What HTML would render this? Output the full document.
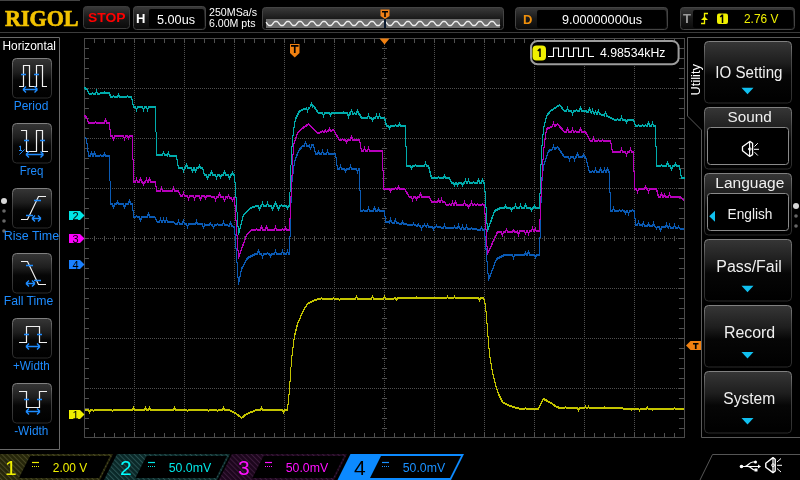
<!DOCTYPE html><html><head><meta charset="utf-8"><style>
html,body{margin:0;padding:0;background:#000;}
body{width:800px;height:480px;position:relative;overflow:hidden;font-family:"Liberation Sans",sans-serif;}
svg{position:absolute;left:0;top:0;will-change:transform;}
</style></head><body>
<svg width="800" height="480" viewBox="0 0 800 480">
<defs>
<linearGradient id="btn" x1="0" y1="0" x2="0" y2="1"><stop offset="0" stop-color="#363636"/><stop offset="0.35" stop-color="#1e1e1e"/><stop offset="0.55" stop-color="#060606"/><stop offset="1" stop-color="#000"/></linearGradient>
<linearGradient id="hbox" x1="0" y1="0" x2="0" y2="1"><stop offset="0" stop-color="#3a3a3a"/><stop offset="0.5" stop-color="#1a1a1a"/><stop offset="1" stop-color="#0a0a0a"/></linearGradient>
<linearGradient id="bord" x1="0" y1="0" x2="0" y2="1"><stop offset="0" stop-color="#808080"/><stop offset="0.3" stop-color="#4a4a4a"/><stop offset="1" stop-color="#2a2a2a"/></linearGradient>
<pattern id="hatY" width="3.6" height="3.6" patternUnits="userSpaceOnUse" patternTransform="rotate(-45)"><rect width="3.6" height="3.6" fill="#26260a"/><rect width="1" height="3.6" fill="#4a4a26"/></pattern>
<pattern id="hatC" width="3.6" height="3.6" patternUnits="userSpaceOnUse" patternTransform="rotate(-45)"><rect width="3.6" height="3.6" fill="#0a2828"/><rect width="1" height="3.6" fill="#2a5252"/></pattern>
<pattern id="hatM" width="3.6" height="3.6" patternUnits="userSpaceOnUse" patternTransform="rotate(-45)"><rect width="3.6" height="3.6" fill="#1c061c"/><rect width="1" height="3.6" fill="#3c1c3c"/></pattern>
</defs>
<line x1="0" y1="0.5" x2="80" y2="0.5" stroke="#444" stroke-width="1"/>
<line x1="0" y1="32.5" x2="800" y2="32.5" stroke="#3c3c3c" stroke-width="1"/>
<text x="5" y="26" font-family="Liberation Serif" font-weight="bold" font-size="24" fill="#f2c200" stroke="#f2c200" stroke-width="0.7" textLength="73.5" lengthAdjust="spacingAndGlyphs">RIGOL</text>
<rect x="83.5" y="6.5" width="46" height="22" rx="3" fill="url(#hbox)" stroke="#3c3c3c"/>
<text x="88" y="21.5" font-family="Liberation Sans" font-weight="bold" font-size="13.5" fill="#f00" textLength="37.5" lengthAdjust="spacingAndGlyphs">STOP</text>
<rect x="133.5" y="6.5" width="72" height="23" rx="3" fill="url(#hbox)" stroke="#444"/>
<rect x="149" y="9" width="55" height="19" rx="2" fill="#000"/>
<text x="136" y="23" font-family="Liberation Sans" font-weight="bold" font-size="13" fill="#fff">H</text>
<text x="157" y="24" font-family="Liberation Sans" font-size="12.5" fill="#fff" textLength="38" lengthAdjust="spacingAndGlyphs">5.00us</text>
<text x="209" y="16.2" font-family="Liberation Sans" font-size="11" fill="#fff" textLength="48" lengthAdjust="spacingAndGlyphs">250MSa/s</text>
<text x="209" y="27" font-family="Liberation Sans" font-size="11" fill="#fff" textLength="46.5" lengthAdjust="spacingAndGlyphs">6.00M pts</text>
<rect x="262.5" y="7.5" width="241" height="22" rx="3" fill="url(#hbox)" stroke="#444"/>
<rect x="266" y="19" width="234" height="9" fill="#6e6e6e"/>
<polyline points="266.0,22.2 267.0,23.5 268.0,24.8 269.0,25.5 270.0,25.5 271.0,25.5 272.0,24.8 273.0,23.5 274.0,22.2 275.0,21.5 276.0,21.5 277.0,21.5 278.0,22.2 279.0,23.5 280.0,24.8 281.0,25.5 282.0,25.5 283.0,25.5 284.0,24.8 285.0,23.5 286.0,22.3 287.0,21.5 288.0,21.5 289.0,21.5 290.0,22.2 291.0,23.5 292.0,24.7 293.0,25.5 294.0,25.5 295.0,25.5 296.0,24.8 297.0,23.5 298.0,22.3 299.0,21.5 300.0,21.5 301.0,21.5 302.0,22.2 303.0,23.5 304.0,24.8 305.0,25.5 306.0,25.5 307.0,25.5 308.0,24.8 309.0,23.5 310.0,22.2 311.0,21.5 312.0,21.5 313.0,21.5 314.0,22.2 315.0,23.5 316.0,24.7 317.0,25.5 318.0,25.5 319.0,25.5 320.0,24.7 321.0,23.5 322.0,22.2 323.0,21.5 324.0,21.5 325.0,21.5 326.0,22.2 327.0,23.5 328.0,24.8 329.0,25.5 330.0,25.5 331.0,25.5 332.0,24.8 333.0,23.5 334.0,22.3 335.0,21.5 336.0,21.5 337.0,21.5 338.0,22.3 339.0,23.5 340.0,24.8 341.0,25.5 342.0,25.5 343.0,25.5 344.0,24.8 345.0,23.5 346.0,22.3 347.0,21.5 348.0,21.5 349.0,21.5 350.0,22.2 351.0,23.5 352.0,24.7 353.0,25.5 354.0,25.5 355.0,25.5 356.0,24.8 357.0,23.5 358.0,22.3 359.0,21.5 360.0,21.5 361.0,21.5 362.0,22.2 363.0,23.5 364.0,24.8 365.0,25.5 366.0,25.5 367.0,25.5 368.0,24.8 369.0,23.5 370.0,22.2 371.0,21.5 372.0,21.5 373.0,21.5 374.0,22.2 375.0,23.5 376.0,24.7 377.0,25.5 378.0,25.5 379.0,25.5 380.0,24.7 381.0,23.5 382.0,22.3 383.0,21.5 384.0,21.5 385.0,21.5 386.0,22.2 387.0,23.5 388.0,24.7 389.0,25.5 390.0,25.5 391.0,25.5 392.0,24.8 393.0,23.5 394.0,22.3 395.0,21.5 396.0,21.5 397.0,21.5 398.0,22.2 399.0,23.5 400.0,24.7 401.0,25.5 402.0,25.5 403.0,25.5 404.0,24.8 405.0,23.5 406.0,22.2 407.0,21.5 408.0,21.5 409.0,21.5 410.0,22.2 411.0,23.5 412.0,24.8 413.0,25.5 414.0,25.5 415.0,25.5 416.0,24.8 417.0,23.5 418.0,22.3 419.0,21.5 420.0,21.5 421.0,21.5 422.0,22.2 423.0,23.5 424.0,24.7 425.0,25.5 426.0,25.5 427.0,25.5 428.0,24.8 429.0,23.5 430.0,22.2 431.0,21.5 432.0,21.5 433.0,21.5 434.0,22.2 435.0,23.5 436.0,24.8 437.0,25.5 438.0,25.5 439.0,25.5 440.0,24.7 441.0,23.5 442.0,22.3 443.0,21.5 444.0,21.5 445.0,21.5 446.0,22.2 447.0,23.5 448.0,24.7 449.0,25.5 450.0,25.5 451.0,25.5 452.0,24.8 453.0,23.5 454.0,22.3 455.0,21.5 456.0,21.5 457.0,21.5 458.0,22.2 459.0,23.5 460.0,24.8 461.0,25.5 462.0,25.5 463.0,25.5 464.0,24.8 465.0,23.5 466.0,22.3 467.0,21.5 468.0,21.5 469.0,21.5 470.0,22.3 471.0,23.5 472.0,24.7 473.0,25.5 474.0,25.5 475.0,25.5 476.0,24.8 477.0,23.5 478.0,22.2 479.0,21.5 480.0,21.5 481.0,21.5 482.0,22.2 483.0,23.5 484.0,24.7 485.0,25.5 486.0,25.5 487.0,25.5 488.0,24.8 489.0,23.5 490.0,22.2 491.0,21.5 492.0,21.5 493.0,21.5 494.0,22.2 495.0,23.5 496.0,24.7 497.0,25.5 498.0,25.5 499.0,25.5 500.0,24.7" fill="none" stroke="#eee" stroke-width="1.3"/>
<rect x="384" y="19" width="2" height="9" fill="#0a1a30"/>
<path d="M380.5 9.5 H389.5 V16 L385 19 L380.5 16 Z" fill="#f08018"/>
<path d="M382 11 H388 V12.5 H385.8 V17 H384.2 V12.5 H382 Z" fill="#000"/>
<rect x="515.5" y="7.5" width="152" height="22" rx="3" fill="url(#hbox)" stroke="#444"/>
<rect x="537" y="10" width="129" height="18" rx="2" fill="#000"/>
<text x="523" y="24" font-family="Liberation Sans" font-weight="bold" font-size="13" fill="#f0900c">D</text>
<text x="562" y="24" font-family="Liberation Sans" font-size="12.5" fill="#fff" textLength="80" lengthAdjust="spacingAndGlyphs">9.00000000us</text>
<rect x="680.5" y="7.5" width="114" height="22" rx="3" fill="url(#hbox)" stroke="#444"/>
<rect x="693" y="10" width="100" height="18" rx="2" fill="#000"/>
<text x="683" y="23" font-family="Liberation Sans" font-weight="bold" font-size="13" fill="#999">T</text>
<path d="M701 23.5 H704.5 V13.5 H708" fill="none" stroke="#f0f000" stroke-width="1.3"/><path d="M701 20 L704.5 16.5 L708 20 Z" fill="#f0f000"/>
<rect x="717" y="13.5" width="11" height="10.5" rx="2" fill="#f0f000"/>
<path d="M722.5 14.5 V23 M722.5 14.8 L720.3 17" stroke="#000" stroke-width="1.5" fill="none"/>
<text x="744" y="23" font-family="Liberation Sans" font-size="12" fill="#f0f000" textLength="34.3" lengthAdjust="spacingAndGlyphs">2.76 V</text>
<g shape-rendering="crispEdges"><line x1="134.5" y1="38" x2="134.5" y2="438" stroke="#505050" stroke-dasharray="1 1"/><line x1="184.5" y1="38" x2="184.5" y2="438" stroke="#505050" stroke-dasharray="1 1"/><line x1="234.5" y1="38" x2="234.5" y2="438" stroke="#505050" stroke-dasharray="1 1"/><line x1="284.5" y1="38" x2="284.5" y2="438" stroke="#505050" stroke-dasharray="1 1"/><line x1="334.5" y1="38" x2="334.5" y2="438" stroke="#505050" stroke-dasharray="1 1"/><line x1="434.5" y1="38" x2="434.5" y2="438" stroke="#505050" stroke-dasharray="1 1"/><line x1="484.5" y1="38" x2="484.5" y2="438" stroke="#505050" stroke-dasharray="1 1"/><line x1="534.5" y1="38" x2="534.5" y2="438" stroke="#505050" stroke-dasharray="1 1"/><line x1="584.5" y1="38" x2="584.5" y2="438" stroke="#505050" stroke-dasharray="1 1"/><line x1="634.5" y1="38" x2="634.5" y2="438" stroke="#505050" stroke-dasharray="1 1"/><line x1="84" y1="88.5" x2="684" y2="88.5" stroke="#505050" stroke-dasharray="1 1"/><line x1="84" y1="138.5" x2="684" y2="138.5" stroke="#505050" stroke-dasharray="1 1"/><line x1="84" y1="188.5" x2="684" y2="188.5" stroke="#505050" stroke-dasharray="1 1"/><line x1="84" y1="288.5" x2="684" y2="288.5" stroke="#505050" stroke-dasharray="1 1"/><line x1="84" y1="338.5" x2="684" y2="338.5" stroke="#505050" stroke-dasharray="1 1"/><line x1="84" y1="388.5" x2="684" y2="388.5" stroke="#505050" stroke-dasharray="1 1"/><line x1="384.5" y1="38" x2="384.5" y2="438" stroke="#505050" stroke-dasharray="1 1"/><line x1="84" y1="238.5" x2="684" y2="238.5" stroke="#505050" stroke-dasharray="1 1"/><path d="M94.5 38 V43 M94.5 433 V438 M94.5 236 V241 M104.5 38 V43 M104.5 433 V438 M104.5 236 V241 M114.5 38 V43 M114.5 433 V438 M114.5 236 V241 M124.5 38 V43 M124.5 433 V438 M124.5 236 V241 M134.5 38 V43 M134.5 433 V438 M134.5 236 V241 M144.5 38 V43 M144.5 433 V438 M144.5 236 V241 M154.5 38 V43 M154.5 433 V438 M154.5 236 V241 M164.5 38 V43 M164.5 433 V438 M164.5 236 V241 M174.5 38 V43 M174.5 433 V438 M174.5 236 V241 M184.5 38 V43 M184.5 433 V438 M184.5 236 V241 M194.5 38 V43 M194.5 433 V438 M194.5 236 V241 M204.5 38 V43 M204.5 433 V438 M204.5 236 V241 M214.5 38 V43 M214.5 433 V438 M214.5 236 V241 M224.5 38 V43 M224.5 433 V438 M224.5 236 V241 M234.5 38 V43 M234.5 433 V438 M234.5 236 V241 M244.5 38 V43 M244.5 433 V438 M244.5 236 V241 M254.5 38 V43 M254.5 433 V438 M254.5 236 V241 M264.5 38 V43 M264.5 433 V438 M264.5 236 V241 M274.5 38 V43 M274.5 433 V438 M274.5 236 V241 M284.5 38 V43 M284.5 433 V438 M284.5 236 V241 M294.5 38 V43 M294.5 433 V438 M294.5 236 V241 M304.5 38 V43 M304.5 433 V438 M304.5 236 V241 M314.5 38 V43 M314.5 433 V438 M314.5 236 V241 M324.5 38 V43 M324.5 433 V438 M324.5 236 V241 M334.5 38 V43 M334.5 433 V438 M334.5 236 V241 M344.5 38 V43 M344.5 433 V438 M344.5 236 V241 M354.5 38 V43 M354.5 433 V438 M354.5 236 V241 M364.5 38 V43 M364.5 433 V438 M364.5 236 V241 M374.5 38 V43 M374.5 433 V438 M374.5 236 V241 M384.5 38 V43 M384.5 433 V438 M384.5 236 V241 M394.5 38 V43 M394.5 433 V438 M394.5 236 V241 M404.5 38 V43 M404.5 433 V438 M404.5 236 V241 M414.5 38 V43 M414.5 433 V438 M414.5 236 V241 M424.5 38 V43 M424.5 433 V438 M424.5 236 V241 M434.5 38 V43 M434.5 433 V438 M434.5 236 V241 M444.5 38 V43 M444.5 433 V438 M444.5 236 V241 M454.5 38 V43 M454.5 433 V438 M454.5 236 V241 M464.5 38 V43 M464.5 433 V438 M464.5 236 V241 M474.5 38 V43 M474.5 433 V438 M474.5 236 V241 M484.5 38 V43 M484.5 433 V438 M484.5 236 V241 M494.5 38 V43 M494.5 433 V438 M494.5 236 V241 M504.5 38 V43 M504.5 433 V438 M504.5 236 V241 M514.5 38 V43 M514.5 433 V438 M514.5 236 V241 M524.5 38 V43 M524.5 433 V438 M524.5 236 V241 M534.5 38 V43 M534.5 433 V438 M534.5 236 V241 M544.5 38 V43 M544.5 433 V438 M544.5 236 V241 M554.5 38 V43 M554.5 433 V438 M554.5 236 V241 M564.5 38 V43 M564.5 433 V438 M564.5 236 V241 M574.5 38 V43 M574.5 433 V438 M574.5 236 V241 M584.5 38 V43 M584.5 433 V438 M584.5 236 V241 M594.5 38 V43 M594.5 433 V438 M594.5 236 V241 M604.5 38 V43 M604.5 433 V438 M604.5 236 V241 M614.5 38 V43 M614.5 433 V438 M614.5 236 V241 M624.5 38 V43 M624.5 433 V438 M624.5 236 V241 M634.5 38 V43 M634.5 433 V438 M634.5 236 V241 M644.5 38 V43 M644.5 433 V438 M644.5 236 V241 M654.5 38 V43 M654.5 433 V438 M654.5 236 V241 M664.5 38 V43 M664.5 433 V438 M664.5 236 V241 M674.5 38 V43 M674.5 433 V438 M674.5 236 V241 M84 48.5 H89 M679 48.5 H684 M382 48.5 H387 M84 58.5 H89 M679 58.5 H684 M382 58.5 H387 M84 68.5 H89 M679 68.5 H684 M382 68.5 H387 M84 78.5 H89 M679 78.5 H684 M382 78.5 H387 M84 88.5 H89 M679 88.5 H684 M382 88.5 H387 M84 98.5 H89 M679 98.5 H684 M382 98.5 H387 M84 108.5 H89 M679 108.5 H684 M382 108.5 H387 M84 118.5 H89 M679 118.5 H684 M382 118.5 H387 M84 128.5 H89 M679 128.5 H684 M382 128.5 H387 M84 138.5 H89 M679 138.5 H684 M382 138.5 H387 M84 148.5 H89 M679 148.5 H684 M382 148.5 H387 M84 158.5 H89 M679 158.5 H684 M382 158.5 H387 M84 168.5 H89 M679 168.5 H684 M382 168.5 H387 M84 178.5 H89 M679 178.5 H684 M382 178.5 H387 M84 188.5 H89 M679 188.5 H684 M382 188.5 H387 M84 198.5 H89 M679 198.5 H684 M382 198.5 H387 M84 208.5 H89 M679 208.5 H684 M382 208.5 H387 M84 218.5 H89 M679 218.5 H684 M382 218.5 H387 M84 228.5 H89 M679 228.5 H684 M382 228.5 H387 M84 238.5 H89 M679 238.5 H684 M382 238.5 H387 M84 248.5 H89 M679 248.5 H684 M382 248.5 H387 M84 258.5 H89 M679 258.5 H684 M382 258.5 H387 M84 268.5 H89 M679 268.5 H684 M382 268.5 H387 M84 278.5 H89 M679 278.5 H684 M382 278.5 H387 M84 288.5 H89 M679 288.5 H684 M382 288.5 H387 M84 298.5 H89 M679 298.5 H684 M382 298.5 H387 M84 308.5 H89 M679 308.5 H684 M382 308.5 H387 M84 318.5 H89 M679 318.5 H684 M382 318.5 H387 M84 328.5 H89 M679 328.5 H684 M382 328.5 H387 M84 338.5 H89 M679 338.5 H684 M382 338.5 H387 M84 348.5 H89 M679 348.5 H684 M382 348.5 H387 M84 358.5 H89 M679 358.5 H684 M382 358.5 H387 M84 368.5 H89 M679 368.5 H684 M382 368.5 H387 M84 378.5 H89 M679 378.5 H684 M382 378.5 H387 M84 388.5 H89 M679 388.5 H684 M382 388.5 H387 M84 398.5 H89 M679 398.5 H684 M382 398.5 H387 M84 408.5 H89 M679 408.5 H684 M382 408.5 H387 M84 418.5 H89 M679 418.5 H684 M382 418.5 H387 M84 428.5 H89 M679 428.5 H684 M382 428.5 H387" stroke="#505050" stroke-width="1" fill="none"/><rect x="84.5" y="38.5" width="600" height="399" fill="none" stroke="#4a4a4a"/></g>
<g transform="translate(0.5,0.5)" shape-rendering="crispEdges" fill="none" stroke="#c4c400" stroke-width="1"><polyline points="84.0,409.0 88.0,409.0 89.0,411.0 90.0,409.0 92.0,409.0 93.0,410.0 94.0,409.0 111.0,409.0 112.0,410.0 113.0,409.0 132.0,409.0 133.0,407.0 134.0,409.0 144.0,409.0 145.0,407.0 146.0,409.0 148.0,409.0 149.0,407.0 150.0,409.0 173.0,409.0 174.0,407.0 175.0,409.0 186.0,409.0 187.0,410.0 188.0,409.0 207.0,409.0 208.0,410.0 209.0,409.0 216.0,409.0 217.0,410.0 218.0,409.0 222.0,409.0 223.0,407.0 224.0,409.0 228.0,409.0 235.0,412.0 241.0,417.0 246.0,413.0 251.0,411.0 256.0,409.0 260.0,409.0 261.0,407.0 262.0,409.0 282.0,409.0 283.0,411.0 284.0,409.0 287.0,409.0 289.0,388.0 291.0,359.0 294.0,335.0 297.0,323.0 300.0,316.0 303.0,309.0 307.0,303.0 312.0,300.0 318.0,298.0 320.0,298.0 321.0,297.0 322.0,298.0 332.0,297.9 333.0,296.9 334.0,297.9 338.0,297.9 339.0,298.9 340.0,297.9 355.0,297.8 356.0,295.8 357.0,297.8 371.0,297.7 372.0,295.7 373.0,297.7 383.0,297.6 384.0,295.6 385.0,297.6 395.0,297.5 396.0,298.5 397.0,297.5 415.0,297.4 416.0,296.4 417.0,297.4 446.0,297.2 447.0,295.2 448.0,297.2 453.0,297.2 454.0,295.2 455.0,297.2 478.0,297.0 479.0,299.0 480.0,297.0 483.0,297.0 485.0,304.0 486.0,316.0 489.0,354.0 492.0,371.0 495.0,384.0 498.0,393.0 502.0,401.0 507.0,404.0 513.0,406.0 520.0,408.0 524.0,408.0 525.0,407.0 526.0,408.0 538.0,408.0 541.0,401.0 543.0,398.0 547.0,400.0 552.0,403.0 556.0,406.0 560.0,407.0 564.0,407.0 565.0,406.0 566.0,407.0 577.0,407.1 578.0,409.1 579.0,407.1 584.0,407.2 585.0,405.2 586.0,407.2 587.0,407.2 588.0,405.2 589.0,407.2 603.0,407.3 604.0,406.3 605.0,407.3 630.0,407.6 631.0,408.6 632.0,407.6 638.0,407.6 639.0,409.6 640.0,407.6 646.0,407.7 647.0,406.7 648.0,407.7 651.0,407.7 652.0,408.7 653.0,407.7 673.0,407.9 674.0,406.9 675.0,407.9 684.0,408.0"/><polyline points="84.0,410.0 88.0,410.0 89.0,412.0 90.0,410.0 92.0,410.0 93.0,411.0 94.0,410.0 111.0,410.0 112.0,411.0 113.0,410.0 132.0,410.0 133.0,408.0 134.0,410.0 144.0,410.0 145.0,408.0 146.0,410.0 148.0,410.0 149.0,408.0 150.0,410.0 173.0,410.0 174.0,408.0 175.0,410.0 186.0,410.0 187.0,411.0 188.0,410.0 207.0,410.0 208.0,411.0 209.0,410.0 216.0,410.0 217.0,411.0 218.0,410.0 222.0,410.0 223.0,408.0 224.0,410.0 228.0,410.0 235.0,413.0 241.0,418.0 246.0,414.0 251.0,412.0 256.0,410.0 260.0,410.0 261.0,408.0 262.0,410.0 282.0,410.0 283.0,412.0 284.0,410.0 287.0,410.0 289.0,389.0 291.0,360.0 294.0,336.0 297.0,324.0 300.0,317.0 303.0,310.0 307.0,304.0 312.0,301.0 318.0,299.0 320.0,299.0 321.0,298.0 322.0,299.0 332.0,298.9 333.0,297.9 334.0,298.9 338.0,298.9 339.0,299.9 340.0,298.9 355.0,298.8 356.0,296.8 357.0,298.8 371.0,298.7 372.0,296.7 373.0,298.7 383.0,298.6 384.0,296.6 385.0,298.6 395.0,298.5 396.0,299.5 397.0,298.5 415.0,298.4 416.0,297.4 417.0,298.4 446.0,298.2 447.0,296.2 448.0,298.2 453.0,298.2 454.0,296.2 455.0,298.2 478.0,298.0 479.0,300.0 480.0,298.0 483.0,298.0 485.0,305.0 486.0,317.0 489.0,355.0 492.0,372.0 495.0,385.0 498.0,394.0 502.0,402.0 507.0,405.0 513.0,407.0 520.0,409.0 524.0,409.0 525.0,408.0 526.0,409.0 538.0,409.0 541.0,402.0 543.0,399.0 547.0,401.0 552.0,404.0 556.0,407.0 560.0,408.0 564.0,408.0 565.0,407.0 566.0,408.0 577.0,408.1 578.0,410.1 579.0,408.1 584.0,408.2 585.0,406.2 586.0,408.2 587.0,408.2 588.0,406.2 589.0,408.2 603.0,408.3 604.0,407.3 605.0,408.3 630.0,408.6 631.0,409.6 632.0,408.6 638.0,408.6 639.0,410.6 640.0,408.6 646.0,408.7 647.0,407.7 648.0,408.7 651.0,408.7 652.0,409.7 653.0,408.7 673.0,408.9 674.0,407.9 675.0,408.9 684.0,409.0"/></g>
<g transform="translate(0.5,0.5)" shape-rendering="crispEdges"><polyline points="85.0,137.0 86.0,138.0 88.0,155.0 90.0,155.0 91.0,151.0 92.0,155.0 93.0,155.0 94.0,151.0 95.0,155.0 99.0,155.0 100.0,154.0 101.0,155.0 103.0,155.0 104.0,153.0 105.0,155.0 109.0,155.0 110.0,203.0 112.0,203.0 113.0,207.0 114.0,203.0 116.0,203.0 117.0,201.0 118.0,203.0 123.0,203.0 124.0,207.0 125.0,203.0 128.0,203.0 129.0,199.0 130.0,203.0 132.0,203.0 133.0,216.0 135.0,216.0 136.0,215.0 137.0,216.0 139.0,216.0 140.0,220.0 141.0,216.0 147.0,216.0 148.0,212.0 149.0,216.0 154.0,216.0 157.0,221.0 159.0,221.0 160.0,218.0 161.0,221.0 162.0,221.0 163.0,218.0 164.0,221.0 165.0,221.0 166.0,218.0 167.0,221.0 173.0,221.0 175.0,223.0 177.0,223.0 178.0,220.0 179.0,223.0 182.0,223.1 183.0,219.1 184.0,223.1 186.0,223.2 187.0,226.2 188.0,223.2 195.0,223.4 196.0,220.4 197.0,223.4 202.0,223.5 203.0,227.5 204.0,223.5 209.0,223.7 210.0,222.7 211.0,223.7 212.0,223.7 213.0,227.7 214.0,223.7 216.0,223.8 217.0,222.8 218.0,223.8 222.0,223.9 223.0,220.9 224.0,223.9 225.0,224.0 229.0,224.9 230.0,220.9 231.0,224.9 234.0,226.0 238.0,283.0 241.0,268.0 247.0,257.0 255.0,253.0 257.0,253.0 258.0,249.0 259.0,253.0 261.0,253.0 262.0,256.0 263.0,253.0 266.0,253.0 267.0,252.0 268.0,253.0 269.0,253.0 270.0,255.0 271.0,253.0 274.0,253.0 275.0,250.0 276.0,253.0 281.0,253.0 282.0,250.0 283.0,253.0 286.0,253.0 287.0,250.0 288.0,253.0 289.0,253.0 291.0,185.0 294.0,161.0 298.0,150.0 302.0,145.0 304.0,144.8 305.0,140.8 306.0,144.8 309.0,144.4 310.0,148.4 311.0,144.4 313.0,144.0 315.0,153.0 317.0,153.0 318.0,151.0 319.0,153.0 321.0,153.0 322.0,150.0 323.0,153.0 326.0,153.0 327.0,150.0 328.0,153.0 335.0,153.0 337.0,168.0 339.0,168.0 340.0,165.0 341.0,168.0 344.0,168.0 345.0,170.0 346.0,168.0 349.0,168.0 350.0,165.0 351.0,168.0 356.0,168.0 357.0,171.0 358.0,168.0 359.0,168.0 360.0,210.0 362.0,210.0 363.0,209.0 364.0,210.0 367.0,210.0 368.0,207.0 369.0,210.0 373.0,210.0 374.0,206.0 375.0,210.0 377.0,210.0 378.0,208.0 379.0,210.0 384.0,210.0 385.0,221.0 389.0,221.5 390.0,218.5 391.0,221.5 394.0,222.1 395.0,218.1 396.0,222.1 401.0,222.9 402.0,220.9 403.0,222.9 410.0,224.0 412.0,224.2 413.0,222.2 414.0,224.2 417.0,224.7 418.0,223.7 419.0,224.7 420.0,225.0 421.0,228.0 422.0,225.0 423.0,225.3 424.0,223.3 425.0,225.3 426.0,225.6 427.0,223.6 428.0,225.6 430.0,226.0 432.0,226.1 433.0,228.1 434.0,226.1 435.0,226.3 436.0,224.3 437.0,226.3 443.0,226.7 444.0,223.7 445.0,226.7 453.0,227.3 454.0,225.3 455.0,227.3 457.0,227.5 458.0,224.5 459.0,227.5 461.0,227.7 462.0,224.7 463.0,227.7 465.0,227.9 466.0,224.9 467.0,227.9 470.0,228.2 471.0,227.2 472.0,228.2 480.0,228.8 481.0,226.8 482.0,228.8 484.0,229.0 488.0,279.0 496.0,258.0 504.0,254.0 512.0,254.0 513.0,257.0 514.0,254.0 524.0,254.0 525.0,252.0 526.0,254.0 527.0,254.0 528.0,250.0 529.0,254.0 534.0,254.0 535.0,256.0 536.0,254.0 539.0,254.0 541.0,185.0 543.0,165.0 548.0,150.0 552.0,148.2 553.0,145.2 554.0,148.2 557.0,146.0 564.0,156.0 568.0,156.0 569.0,159.0 570.0,156.0 573.0,156.0 574.0,159.0 575.0,156.0 576.0,156.0 577.0,152.0 578.0,156.0 582.0,156.0 583.0,154.0 584.0,156.0 585.0,156.0 589.0,171.0 591.0,171.0 592.0,170.0 593.0,171.0 594.0,171.0 595.0,168.0 596.0,171.0 599.0,171.0 600.0,167.0 601.0,171.0 603.0,171.0 604.0,168.0 605.0,171.0 606.0,171.0 607.0,167.0 608.0,171.0 609.0,171.0 610.0,210.0 612.0,210.0 613.0,207.0 614.0,210.0 618.0,210.0 619.0,209.0 620.0,210.0 621.0,210.0 622.0,209.0 623.0,210.0 624.0,210.0 625.0,212.0 626.0,210.0 627.0,210.0 628.0,213.0 629.0,210.0 631.0,210.0 632.0,209.0 633.0,210.0 634.0,210.0 635.0,224.0 637.0,224.2 638.0,221.2 639.0,224.2 642.0,224.6 643.0,221.6 644.0,224.6 647.0,225.0 648.0,223.0 649.0,225.0 652.0,225.4 653.0,222.4 654.0,225.4 655.0,225.6 656.0,227.6 657.0,225.6 659.0,226.0 660.0,230.0 661.0,226.0 665.0,226.4 666.0,223.4 667.0,226.4 668.0,226.7 669.0,223.7 670.0,226.7 673.0,227.1 674.0,224.1 675.0,227.1 677.0,227.4 678.0,225.4 679.0,227.4 684.0,228.0" fill="none" stroke="#0a5ab4" stroke-width="1"/><polyline points="85.0,138.0 86.0,139.0 88.0,156.0 90.0,156.0 91.0,152.0 92.0,156.0 93.0,156.0 94.0,152.0 95.0,156.0 99.0,156.0 100.0,155.0 101.0,156.0 103.0,156.0 104.0,154.0 105.0,156.0 109.0,156.0 110.0,204.0 112.0,204.0 113.0,208.0 114.0,204.0 116.0,204.0 117.0,202.0 118.0,204.0 123.0,204.0 124.0,208.0 125.0,204.0 128.0,204.0 129.0,200.0 130.0,204.0 132.0,204.0 133.0,217.0 135.0,217.0 136.0,216.0 137.0,217.0 139.0,217.0 140.0,221.0 141.0,217.0 147.0,217.0 148.0,213.0 149.0,217.0 154.0,217.0 157.0,222.0 159.0,222.0 160.0,219.0 161.0,222.0 162.0,222.0 163.0,219.0 164.0,222.0 165.0,222.0 166.0,219.0 167.0,222.0 173.0,222.0 175.0,224.0 177.0,224.0 178.0,221.0 179.0,224.0 182.0,224.1 183.0,220.1 184.0,224.1 186.0,224.2 187.0,227.2 188.0,224.2 195.0,224.4 196.0,221.4 197.0,224.4 202.0,224.5 203.0,228.5 204.0,224.5 209.0,224.7 210.0,223.7 211.0,224.7 212.0,224.7 213.0,228.7 214.0,224.7 216.0,224.8 217.0,223.8 218.0,224.8 222.0,224.9 223.0,221.9 224.0,224.9 225.0,225.0 229.0,225.9 230.0,221.9 231.0,225.9 234.0,227.0 238.0,284.0 241.0,269.0 247.0,258.0 255.0,254.0 257.0,254.0 258.0,250.0 259.0,254.0 261.0,254.0 262.0,257.0 263.0,254.0 266.0,254.0 267.0,253.0 268.0,254.0 269.0,254.0 270.0,256.0 271.0,254.0 274.0,254.0 275.0,251.0 276.0,254.0 281.0,254.0 282.0,251.0 283.0,254.0 286.0,254.0 287.0,251.0 288.0,254.0 289.0,254.0 291.0,186.0 294.0,162.0 298.0,151.0 302.0,146.0 304.0,145.8 305.0,141.8 306.0,145.8 309.0,145.4 310.0,149.4 311.0,145.4 313.0,145.0 315.0,154.0 317.0,154.0 318.0,152.0 319.0,154.0 321.0,154.0 322.0,151.0 323.0,154.0 326.0,154.0 327.0,151.0 328.0,154.0 335.0,154.0 337.0,169.0 339.0,169.0 340.0,166.0 341.0,169.0 344.0,169.0 345.0,171.0 346.0,169.0 349.0,169.0 350.0,166.0 351.0,169.0 356.0,169.0 357.0,172.0 358.0,169.0 359.0,169.0 360.0,211.0 362.0,211.0 363.0,210.0 364.0,211.0 367.0,211.0 368.0,208.0 369.0,211.0 373.0,211.0 374.0,207.0 375.0,211.0 377.0,211.0 378.0,209.0 379.0,211.0 384.0,211.0 385.0,222.0 389.0,222.5 390.0,219.5 391.0,222.5 394.0,223.1 395.0,219.1 396.0,223.1 401.0,223.9 402.0,221.9 403.0,223.9 410.0,225.0 412.0,225.2 413.0,223.2 414.0,225.2 417.0,225.7 418.0,224.7 419.0,225.7 420.0,226.0 421.0,229.0 422.0,226.0 423.0,226.3 424.0,224.3 425.0,226.3 426.0,226.6 427.0,224.6 428.0,226.6 430.0,227.0 432.0,227.1 433.0,229.1 434.0,227.1 435.0,227.3 436.0,225.3 437.0,227.3 443.0,227.7 444.0,224.7 445.0,227.7 453.0,228.3 454.0,226.3 455.0,228.3 457.0,228.5 458.0,225.5 459.0,228.5 461.0,228.7 462.0,225.7 463.0,228.7 465.0,228.9 466.0,225.9 467.0,228.9 470.0,229.2 471.0,228.2 472.0,229.2 480.0,229.8 481.0,227.8 482.0,229.8 484.0,230.0 488.0,280.0 496.0,259.0 504.0,255.0 512.0,255.0 513.0,258.0 514.0,255.0 524.0,255.0 525.0,253.0 526.0,255.0 527.0,255.0 528.0,251.0 529.0,255.0 534.0,255.0 535.0,257.0 536.0,255.0 539.0,255.0 541.0,186.0 543.0,166.0 548.0,151.0 552.0,149.2 553.0,146.2 554.0,149.2 557.0,147.0 564.0,157.0 568.0,157.0 569.0,160.0 570.0,157.0 573.0,157.0 574.0,160.0 575.0,157.0 576.0,157.0 577.0,153.0 578.0,157.0 582.0,157.0 583.0,155.0 584.0,157.0 585.0,157.0 589.0,172.0 591.0,172.0 592.0,171.0 593.0,172.0 594.0,172.0 595.0,169.0 596.0,172.0 599.0,172.0 600.0,168.0 601.0,172.0 603.0,172.0 604.0,169.0 605.0,172.0 606.0,172.0 607.0,168.0 608.0,172.0 609.0,172.0 610.0,211.0 612.0,211.0 613.0,208.0 614.0,211.0 618.0,211.0 619.0,210.0 620.0,211.0 621.0,211.0 622.0,210.0 623.0,211.0 624.0,211.0 625.0,213.0 626.0,211.0 627.0,211.0 628.0,214.0 629.0,211.0 631.0,211.0 632.0,210.0 633.0,211.0 634.0,211.0 635.0,225.0 637.0,225.2 638.0,222.2 639.0,225.2 642.0,225.6 643.0,222.6 644.0,225.6 647.0,226.0 648.0,224.0 649.0,226.0 652.0,226.4 653.0,223.4 654.0,226.4 655.0,226.6 656.0,228.6 657.0,226.6 659.0,227.0 660.0,231.0 661.0,227.0 665.0,227.4 666.0,224.4 667.0,227.4 668.0,227.7 669.0,224.7 670.0,227.7 673.0,228.1 674.0,225.1 675.0,228.1 677.0,228.4 678.0,226.4 679.0,228.4 684.0,229.0" fill="none" stroke="#0a5ab4" stroke-width="1"/></g>
<g transform="translate(0.5,0.5)" shape-rendering="crispEdges"><polyline points="84.0,115.0 86.0,116.0 88.0,122.0 94.0,122.0 95.0,121.0 96.0,122.0 104.0,122.0 105.0,118.0 106.0,122.0 109.0,122.0 110.0,135.0 112.0,135.0 113.0,139.0 114.0,135.0 123.0,135.0 124.0,138.0 125.0,135.0 127.0,135.0 128.0,137.0 129.0,135.0 132.0,135.0 133.0,181.0 135.0,181.0 136.0,178.0 137.0,181.0 139.0,181.0 140.0,177.0 141.0,181.0 142.0,181.0 143.0,183.0 144.0,181.0 145.0,181.0 146.0,178.0 147.0,181.0 148.0,181.0 149.0,177.0 150.0,181.0 155.0,181.0 156.0,190.0 160.0,190.0 161.0,187.0 162.0,190.0 172.0,190.0 173.0,187.0 174.0,190.0 178.0,190.0 180.0,195.0 182.0,195.0 183.0,192.0 184.0,195.0 187.0,195.0 188.0,198.0 189.0,195.0 193.0,195.0 194.0,198.0 195.0,195.0 199.0,195.0 200.0,199.0 201.0,195.0 202.0,195.0 204.0,195.1 205.0,197.1 206.0,195.1 214.0,195.8 215.0,198.8 216.0,195.8 218.0,196.0 219.0,192.0 220.0,196.0 223.0,196.3 224.0,200.3 225.0,196.3 227.0,196.6 228.0,194.6 229.0,196.6 231.0,196.8 232.0,200.8 233.0,196.8 234.0,197.0 238.0,257.0 246.0,234.0 251.0,229.0 255.0,229.0 256.0,228.0 257.0,229.0 260.0,229.0 261.0,225.0 262.0,229.0 265.0,229.0 266.0,225.0 267.0,229.0 274.0,229.0 275.0,226.0 276.0,229.0 281.0,229.0 282.0,228.0 283.0,229.0 284.0,229.0 285.0,227.0 286.0,229.0 289.0,229.0 291.0,185.0 293.0,144.0 297.0,132.0 301.0,128.0 308.0,123.0 317.0,132.0 321.0,131.2 322.0,130.2 323.0,131.2 324.0,130.7 325.0,129.7 326.0,130.7 328.0,129.9 329.0,127.9 330.0,129.9 333.0,129.0 339.0,139.0 341.0,139.0 342.0,138.0 343.0,139.0 345.0,139.0 346.0,141.0 347.0,139.0 350.0,139.0 351.0,135.0 352.0,139.0 359.0,139.0 361.0,150.0 363.0,150.0 364.0,147.0 365.0,150.0 367.0,150.0 368.0,147.0 369.0,150.0 382.0,150.0 383.0,188.0 389.0,188.0 390.0,190.0 391.0,188.0 394.0,188.0 395.0,187.0 396.0,188.0 397.0,188.0 398.0,186.0 399.0,188.0 404.0,188.0 409.0,196.0 411.0,196.0 412.0,199.0 413.0,196.0 415.0,196.0 416.0,198.0 417.0,196.0 419.0,196.0 420.0,192.0 421.0,196.0 429.0,196.0 431.0,201.0 437.0,201.0 438.0,199.0 439.0,201.0 440.0,201.0 441.0,198.0 442.0,201.0 444.0,201.0 446.0,204.0 448.0,204.0 449.0,203.0 450.0,204.0 451.0,204.0 452.0,201.0 453.0,204.0 454.0,204.0 455.0,200.0 456.0,204.0 463.0,204.0 464.0,201.0 465.0,204.0 467.0,204.0 468.0,206.0 469.0,204.0 470.0,204.0 471.0,201.0 472.0,204.0 473.0,204.0 474.0,203.0 475.0,204.0 476.0,204.0 477.0,203.0 478.0,204.0 481.0,204.0 482.0,203.0 483.0,204.0 484.0,204.0 487.0,253.0 497.0,231.0 501.0,230.9 502.0,234.9 503.0,230.9 505.0,230.8 506.0,228.8 507.0,230.8 512.0,230.6 513.0,229.6 514.0,230.6 517.0,230.5 518.0,233.5 519.0,230.5 524.0,230.4 525.0,232.4 526.0,230.4 527.0,230.3 528.0,233.3 529.0,230.3 531.0,230.2 532.0,227.2 533.0,230.2 534.0,230.1 535.0,228.1 536.0,230.1 539.0,230.0 541.0,185.0 543.0,150.0 546.0,128.0 552.0,125.3 553.0,122.3 554.0,125.3 557.0,123.0 564.0,131.0 566.0,131.0 567.0,127.0 568.0,131.0 571.0,131.0 572.0,128.0 573.0,131.0 574.0,131.0 575.0,130.0 576.0,131.0 579.0,131.0 580.0,127.0 581.0,131.0 585.0,131.0 590.0,140.0 592.0,140.0 593.0,137.0 594.0,140.0 597.0,140.0 598.0,139.0 599.0,140.0 601.0,140.0 602.0,139.0 603.0,140.0 610.0,140.0 612.0,151.0 620.0,151.0 621.0,148.0 622.0,151.0 625.0,151.0 626.0,154.0 627.0,151.0 629.0,151.0 630.0,148.0 631.0,151.0 633.0,151.0 634.0,188.0 636.0,188.0 637.0,191.0 638.0,188.0 644.0,188.0 645.0,186.0 646.0,188.0 647.0,188.0 648.0,191.0 649.0,188.0 656.0,188.0 658.0,196.0 660.0,196.0 661.0,192.0 662.0,196.0 663.0,196.0 664.0,194.0 665.0,196.0 668.0,196.0 669.0,193.0 670.0,196.0 680.0,196.0 684.0,200.0" fill="none" stroke="#b800bc" stroke-width="1"/><polyline points="84.0,116.0 86.0,117.0 88.0,123.0 94.0,123.0 95.0,122.0 96.0,123.0 104.0,123.0 105.0,119.0 106.0,123.0 109.0,123.0 110.0,136.0 112.0,136.0 113.0,140.0 114.0,136.0 123.0,136.0 124.0,139.0 125.0,136.0 127.0,136.0 128.0,138.0 129.0,136.0 132.0,136.0 133.0,182.0 135.0,182.0 136.0,179.0 137.0,182.0 139.0,182.0 140.0,178.0 141.0,182.0 142.0,182.0 143.0,184.0 144.0,182.0 145.0,182.0 146.0,179.0 147.0,182.0 148.0,182.0 149.0,178.0 150.0,182.0 155.0,182.0 156.0,191.0 160.0,191.0 161.0,188.0 162.0,191.0 172.0,191.0 173.0,188.0 174.0,191.0 178.0,191.0 180.0,196.0 182.0,196.0 183.0,193.0 184.0,196.0 187.0,196.0 188.0,199.0 189.0,196.0 193.0,196.0 194.0,199.0 195.0,196.0 199.0,196.0 200.0,200.0 201.0,196.0 202.0,196.0 204.0,196.1 205.0,198.1 206.0,196.1 214.0,196.8 215.0,199.8 216.0,196.8 218.0,197.0 219.0,193.0 220.0,197.0 223.0,197.3 224.0,201.3 225.0,197.3 227.0,197.6 228.0,195.6 229.0,197.6 231.0,197.8 232.0,201.8 233.0,197.8 234.0,198.0 238.0,258.0 246.0,235.0 251.0,230.0 255.0,230.0 256.0,229.0 257.0,230.0 260.0,230.0 261.0,226.0 262.0,230.0 265.0,230.0 266.0,226.0 267.0,230.0 274.0,230.0 275.0,227.0 276.0,230.0 281.0,230.0 282.0,229.0 283.0,230.0 284.0,230.0 285.0,228.0 286.0,230.0 289.0,230.0 291.0,186.0 293.0,145.0 297.0,133.0 301.0,129.0 308.0,124.0 317.0,133.0 321.0,132.2 322.0,131.2 323.0,132.2 324.0,131.7 325.0,130.7 326.0,131.7 328.0,130.9 329.0,128.9 330.0,130.9 333.0,130.0 339.0,140.0 341.0,140.0 342.0,139.0 343.0,140.0 345.0,140.0 346.0,142.0 347.0,140.0 350.0,140.0 351.0,136.0 352.0,140.0 359.0,140.0 361.0,151.0 363.0,151.0 364.0,148.0 365.0,151.0 367.0,151.0 368.0,148.0 369.0,151.0 382.0,151.0 383.0,189.0 389.0,189.0 390.0,191.0 391.0,189.0 394.0,189.0 395.0,188.0 396.0,189.0 397.0,189.0 398.0,187.0 399.0,189.0 404.0,189.0 409.0,197.0 411.0,197.0 412.0,200.0 413.0,197.0 415.0,197.0 416.0,199.0 417.0,197.0 419.0,197.0 420.0,193.0 421.0,197.0 429.0,197.0 431.0,202.0 437.0,202.0 438.0,200.0 439.0,202.0 440.0,202.0 441.0,199.0 442.0,202.0 444.0,202.0 446.0,205.0 448.0,205.0 449.0,204.0 450.0,205.0 451.0,205.0 452.0,202.0 453.0,205.0 454.0,205.0 455.0,201.0 456.0,205.0 463.0,205.0 464.0,202.0 465.0,205.0 467.0,205.0 468.0,207.0 469.0,205.0 470.0,205.0 471.0,202.0 472.0,205.0 473.0,205.0 474.0,204.0 475.0,205.0 476.0,205.0 477.0,204.0 478.0,205.0 481.0,205.0 482.0,204.0 483.0,205.0 484.0,205.0 487.0,254.0 497.0,232.0 501.0,231.9 502.0,235.9 503.0,231.9 505.0,231.8 506.0,229.8 507.0,231.8 512.0,231.6 513.0,230.6 514.0,231.6 517.0,231.5 518.0,234.5 519.0,231.5 524.0,231.4 525.0,233.4 526.0,231.4 527.0,231.3 528.0,234.3 529.0,231.3 531.0,231.2 532.0,228.2 533.0,231.2 534.0,231.1 535.0,229.1 536.0,231.1 539.0,231.0 541.0,186.0 543.0,151.0 546.0,129.0 552.0,126.3 553.0,123.3 554.0,126.3 557.0,124.0 564.0,132.0 566.0,132.0 567.0,128.0 568.0,132.0 571.0,132.0 572.0,129.0 573.0,132.0 574.0,132.0 575.0,131.0 576.0,132.0 579.0,132.0 580.0,128.0 581.0,132.0 585.0,132.0 590.0,141.0 592.0,141.0 593.0,138.0 594.0,141.0 597.0,141.0 598.0,140.0 599.0,141.0 601.0,141.0 602.0,140.0 603.0,141.0 610.0,141.0 612.0,152.0 620.0,152.0 621.0,149.0 622.0,152.0 625.0,152.0 626.0,155.0 627.0,152.0 629.0,152.0 630.0,149.0 631.0,152.0 633.0,152.0 634.0,189.0 636.0,189.0 637.0,192.0 638.0,189.0 644.0,189.0 645.0,187.0 646.0,189.0 647.0,189.0 648.0,192.0 649.0,189.0 656.0,189.0 658.0,197.0 660.0,197.0 661.0,193.0 662.0,197.0 663.0,197.0 664.0,195.0 665.0,197.0 668.0,197.0 669.0,194.0 670.0,197.0 680.0,197.0 684.0,201.0" fill="none" stroke="#b800bc" stroke-width="1"/></g>
<g transform="translate(0.5,0.5)" shape-rendering="crispEdges"><polyline points="84.0,87.0 86.0,88.0 89.0,93.0 91.0,92.9 92.0,91.9 93.0,92.9 95.0,92.7 96.0,89.7 97.0,92.7 103.0,92.3 104.0,91.3 105.0,92.3 109.0,92.0 110.0,96.0 112.0,96.0 113.0,95.0 114.0,96.0 117.0,96.0 118.0,94.0 119.0,96.0 126.0,96.0 127.0,95.0 128.0,96.0 131.0,96.0 133.0,106.0 135.0,106.0 136.0,109.0 137.0,106.0 142.0,106.0 143.0,109.0 144.0,106.0 146.0,106.0 147.0,109.0 148.0,106.0 155.0,106.0 156.0,154.0 162.0,154.3 163.0,150.3 164.0,154.3 167.0,154.6 168.0,151.6 169.0,154.6 176.0,155.0 178.0,167.0 182.0,167.0 183.0,170.0 184.0,167.0 185.0,167.0 186.0,163.0 187.0,167.0 191.0,167.0 192.0,171.0 193.0,167.0 194.0,167.0 195.0,171.0 196.0,167.0 198.0,167.0 199.0,165.0 200.0,167.0 202.0,167.0 204.0,174.0 206.0,174.0 207.0,178.0 208.0,174.0 210.0,174.0 211.0,170.0 212.0,174.0 215.0,174.0 216.0,177.0 217.0,174.0 219.0,174.0 220.0,176.0 221.0,174.0 223.0,174.0 224.0,170.0 225.0,174.0 228.0,174.0 229.0,178.0 230.0,174.0 231.0,174.0 232.0,172.0 233.0,174.0 234.0,174.0 238.0,233.0 243.0,214.0 250.0,207.0 256.0,205.0 258.0,205.0 259.0,209.0 260.0,205.0 261.0,205.0 262.0,202.0 263.0,205.0 266.0,205.0 267.0,202.0 268.0,205.0 271.0,205.0 272.0,209.0 273.0,205.0 274.0,205.0 275.0,201.0 276.0,205.0 277.0,205.0 278.0,209.0 279.0,205.0 280.0,205.0 281.0,204.0 282.0,205.0 286.0,205.0 287.0,207.0 288.0,205.0 289.0,205.0 291.0,151.0 293.0,129.0 295.0,118.0 299.0,110.0 304.0,108.0 306.0,107.3 307.0,110.3 308.0,107.3 310.0,106.0 311.0,102.0 312.0,106.0 313.0,105.0 318.0,112.0 322.0,112.0 323.0,115.0 324.0,112.0 329.0,112.0 330.0,114.0 331.0,112.0 334.0,112.0 342.0,112.3 343.0,111.3 344.0,112.3 347.0,112.5 348.0,115.5 349.0,112.5 350.0,112.6 351.0,108.6 352.0,112.6 353.0,112.8 354.0,111.8 355.0,112.8 356.0,112.9 357.0,108.9 358.0,112.9 359.0,113.0 361.0,117.0 367.0,117.0 368.0,114.0 369.0,117.0 371.0,117.0 372.0,119.0 373.0,117.0 375.0,117.0 376.0,114.0 377.0,117.0 378.0,117.0 379.0,114.0 380.0,117.0 384.0,117.0 386.0,125.0 388.0,125.0 389.0,127.0 390.0,125.0 394.0,125.0 395.0,124.0 396.0,125.0 398.0,125.0 399.0,123.0 400.0,125.0 405.0,125.0 406.0,165.0 410.0,165.0 411.0,167.0 412.0,165.0 414.0,165.0 415.0,164.0 416.0,165.0 424.0,165.0 425.0,162.0 426.0,165.0 428.0,165.0 431.0,177.0 437.0,177.0 438.0,176.0 439.0,177.0 443.0,177.0 444.0,175.0 445.0,177.0 449.0,177.0 451.0,182.0 453.0,182.0 454.0,184.0 455.0,182.0 456.0,182.0 457.0,184.0 458.0,182.0 461.0,182.0 462.0,184.0 463.0,182.0 464.0,182.0 465.0,179.0 466.0,182.0 467.0,182.0 468.0,179.0 469.0,182.0 472.0,182.0 473.0,181.0 474.0,182.0 477.0,182.0 478.0,178.0 479.0,182.0 481.0,182.0 482.0,178.0 483.0,182.0 484.0,182.0 487.0,230.0 494.0,210.0 500.0,207.0 504.0,207.0 505.0,205.0 506.0,207.0 510.0,207.0 511.0,209.0 512.0,207.0 514.0,207.0 515.0,204.0 516.0,207.0 519.0,207.0 520.0,204.0 521.0,207.0 524.0,207.0 525.0,203.0 526.0,207.0 530.0,207.0 531.0,209.0 532.0,207.0 533.0,207.0 534.0,205.0 535.0,207.0 539.0,207.0 541.0,150.0 543.0,128.0 546.0,115.0 550.0,110.0 559.0,104.0 564.0,110.0 566.0,110.0 567.0,107.0 568.0,110.0 571.0,110.0 572.0,113.0 573.0,110.0 575.0,110.0 576.0,109.0 577.0,110.0 579.0,110.0 580.0,106.0 581.0,110.0 584.0,110.0 588.0,111.0 589.0,107.0 590.0,111.0 591.0,111.7 592.0,108.7 593.0,111.7 594.0,112.4 595.0,110.4 596.0,112.4 597.0,113.1 598.0,109.1 599.0,113.1 604.0,114.8 605.0,110.8 606.0,114.8 609.0,116.0 614.0,119.0 616.0,119.0 617.0,118.0 618.0,119.0 620.0,119.0 621.0,116.0 622.0,119.0 625.0,119.0 626.0,121.0 627.0,119.0 633.0,119.0 635.0,125.0 637.0,125.0 638.0,124.0 639.0,125.0 641.0,125.0 642.0,124.0 643.0,125.0 644.0,125.0 645.0,124.0 646.0,125.0 647.0,125.0 648.0,121.0 649.0,125.0 651.0,125.0 652.0,122.0 653.0,125.0 655.0,125.0 656.0,165.0 660.0,165.0 661.0,164.0 662.0,165.0 666.0,165.0 667.0,161.0 668.0,165.0 670.0,165.0 671.0,169.0 672.0,165.0 674.0,165.0 675.0,163.0 676.0,165.0 679.0,165.0 681.0,177.0 684.0,177.0" fill="none" stroke="#00acac" stroke-width="1"/><polyline points="84.0,88.0 86.0,89.0 89.0,94.0 91.0,93.9 92.0,92.9 93.0,93.9 95.0,93.7 96.0,90.7 97.0,93.7 103.0,93.3 104.0,92.3 105.0,93.3 109.0,93.0 110.0,97.0 112.0,97.0 113.0,96.0 114.0,97.0 117.0,97.0 118.0,95.0 119.0,97.0 126.0,97.0 127.0,96.0 128.0,97.0 131.0,97.0 133.0,107.0 135.0,107.0 136.0,110.0 137.0,107.0 142.0,107.0 143.0,110.0 144.0,107.0 146.0,107.0 147.0,110.0 148.0,107.0 155.0,107.0 156.0,155.0 162.0,155.3 163.0,151.3 164.0,155.3 167.0,155.6 168.0,152.6 169.0,155.6 176.0,156.0 178.0,168.0 182.0,168.0 183.0,171.0 184.0,168.0 185.0,168.0 186.0,164.0 187.0,168.0 191.0,168.0 192.0,172.0 193.0,168.0 194.0,168.0 195.0,172.0 196.0,168.0 198.0,168.0 199.0,166.0 200.0,168.0 202.0,168.0 204.0,175.0 206.0,175.0 207.0,179.0 208.0,175.0 210.0,175.0 211.0,171.0 212.0,175.0 215.0,175.0 216.0,178.0 217.0,175.0 219.0,175.0 220.0,177.0 221.0,175.0 223.0,175.0 224.0,171.0 225.0,175.0 228.0,175.0 229.0,179.0 230.0,175.0 231.0,175.0 232.0,173.0 233.0,175.0 234.0,175.0 238.0,234.0 243.0,215.0 250.0,208.0 256.0,206.0 258.0,206.0 259.0,210.0 260.0,206.0 261.0,206.0 262.0,203.0 263.0,206.0 266.0,206.0 267.0,203.0 268.0,206.0 271.0,206.0 272.0,210.0 273.0,206.0 274.0,206.0 275.0,202.0 276.0,206.0 277.0,206.0 278.0,210.0 279.0,206.0 280.0,206.0 281.0,205.0 282.0,206.0 286.0,206.0 287.0,208.0 288.0,206.0 289.0,206.0 291.0,152.0 293.0,130.0 295.0,119.0 299.0,111.0 304.0,109.0 306.0,108.3 307.0,111.3 308.0,108.3 310.0,107.0 311.0,103.0 312.0,107.0 313.0,106.0 318.0,113.0 322.0,113.0 323.0,116.0 324.0,113.0 329.0,113.0 330.0,115.0 331.0,113.0 334.0,113.0 342.0,113.3 343.0,112.3 344.0,113.3 347.0,113.5 348.0,116.5 349.0,113.5 350.0,113.6 351.0,109.6 352.0,113.6 353.0,113.8 354.0,112.8 355.0,113.8 356.0,113.9 357.0,109.9 358.0,113.9 359.0,114.0 361.0,118.0 367.0,118.0 368.0,115.0 369.0,118.0 371.0,118.0 372.0,120.0 373.0,118.0 375.0,118.0 376.0,115.0 377.0,118.0 378.0,118.0 379.0,115.0 380.0,118.0 384.0,118.0 386.0,126.0 388.0,126.0 389.0,128.0 390.0,126.0 394.0,126.0 395.0,125.0 396.0,126.0 398.0,126.0 399.0,124.0 400.0,126.0 405.0,126.0 406.0,166.0 410.0,166.0 411.0,168.0 412.0,166.0 414.0,166.0 415.0,165.0 416.0,166.0 424.0,166.0 425.0,163.0 426.0,166.0 428.0,166.0 431.0,178.0 437.0,178.0 438.0,177.0 439.0,178.0 443.0,178.0 444.0,176.0 445.0,178.0 449.0,178.0 451.0,183.0 453.0,183.0 454.0,185.0 455.0,183.0 456.0,183.0 457.0,185.0 458.0,183.0 461.0,183.0 462.0,185.0 463.0,183.0 464.0,183.0 465.0,180.0 466.0,183.0 467.0,183.0 468.0,180.0 469.0,183.0 472.0,183.0 473.0,182.0 474.0,183.0 477.0,183.0 478.0,179.0 479.0,183.0 481.0,183.0 482.0,179.0 483.0,183.0 484.0,183.0 487.0,231.0 494.0,211.0 500.0,208.0 504.0,208.0 505.0,206.0 506.0,208.0 510.0,208.0 511.0,210.0 512.0,208.0 514.0,208.0 515.0,205.0 516.0,208.0 519.0,208.0 520.0,205.0 521.0,208.0 524.0,208.0 525.0,204.0 526.0,208.0 530.0,208.0 531.0,210.0 532.0,208.0 533.0,208.0 534.0,206.0 535.0,208.0 539.0,208.0 541.0,151.0 543.0,129.0 546.0,116.0 550.0,111.0 559.0,105.0 564.0,111.0 566.0,111.0 567.0,108.0 568.0,111.0 571.0,111.0 572.0,114.0 573.0,111.0 575.0,111.0 576.0,110.0 577.0,111.0 579.0,111.0 580.0,107.0 581.0,111.0 584.0,111.0 588.0,112.0 589.0,108.0 590.0,112.0 591.0,112.7 592.0,109.7 593.0,112.7 594.0,113.4 595.0,111.4 596.0,113.4 597.0,114.1 598.0,110.1 599.0,114.1 604.0,115.8 605.0,111.8 606.0,115.8 609.0,117.0 614.0,120.0 616.0,120.0 617.0,119.0 618.0,120.0 620.0,120.0 621.0,117.0 622.0,120.0 625.0,120.0 626.0,122.0 627.0,120.0 633.0,120.0 635.0,126.0 637.0,126.0 638.0,125.0 639.0,126.0 641.0,126.0 642.0,125.0 643.0,126.0 644.0,126.0 645.0,125.0 646.0,126.0 647.0,126.0 648.0,122.0 649.0,126.0 651.0,126.0 652.0,123.0 653.0,126.0 655.0,126.0 656.0,166.0 660.0,166.0 661.0,165.0 662.0,166.0 666.0,166.0 667.0,162.0 668.0,166.0 670.0,166.0 671.0,170.0 672.0,166.0 674.0,166.0 675.0,164.0 676.0,166.0 679.0,166.0 681.0,178.0 684.0,178.0" fill="none" stroke="#00acac" stroke-width="1"/></g>
<path d="M69 211.0 H80 L84.5 215.5 L80 220.0 H69 Z" fill="#00e6e6"/>
<text x="72.5" y="219.5" font-family="Liberation Sans" font-size="11" fill="#000">2</text>
<path d="M69 234.0 H80 L84.5 238.5 L80 243.0 H69 Z" fill="#ff00ff"/>
<text x="72.5" y="242.5" font-family="Liberation Sans" font-size="11" fill="#000">3</text>
<path d="M69 260.0 H80 L84.5 264.5 L80 269.0 H69 Z" fill="#1a80ff"/>
<text x="72.5" y="268.5" font-family="Liberation Sans" font-size="11" fill="#000">4</text>
<path d="M69 410.0 H80 L84.5 414.5 L80 419.0 H69 Z" fill="#f0f000"/>
<text x="72.5" y="418.5" font-family="Liberation Sans" font-size="11" fill="#000">1</text>
<path d="M686 345.5 L690.5 341 H701.5 V350 H690.5 Z" fill="#f08010"/>
<path d="M693 343 H698.5 V344.6 H696.6 V349 H694.9 V344.6 H693 Z" fill="#000"/>
<path d="M290 44 H299.5 V53 L294.75 57.5 L290 53 Z" fill="#f08010"/>
<path d="M291 45 H298.5 V46.7 H295.6 V53 H293.9 V46.7 H291 Z" fill="#000"/>
<path d="M379.5 38.5 H389.5 L384.5 44.5 Z" fill="#f08010"/>
<rect x="531" y="41" width="147.6" height="23.2" rx="6.5" fill="#000" stroke="#9c9c9c" stroke-width="2"/>
<rect x="532.5" y="45.5" width="13.5" height="15" rx="4" fill="#f0f000"/>
<path d="M540 48.5 V57 M540 48.8 L537.8 51" stroke="#000" stroke-width="1.5" fill="none"/>
<path d="M548 56.5 H553.5 V48 H558.5 V56.5 H563.5 V48 H568.5 V56.5 H573.5 V48 H578.5 V56.5 H583.5 V48 H588.5 V56.5 H594" fill="none" stroke="#fff" stroke-width="1.1"/>
<text x="600" y="56.5" font-family="Liberation Sans" font-size="12" fill="#fff" textLength="65.4" lengthAdjust="spacingAndGlyphs">4.98534kHz</text>
<path d="M0 37.5 H59.5 V449.5 H0" fill="none" stroke="#6a6a6a"/>
<text x="2.5" y="49.7" font-family="Liberation Sans" font-size="12" fill="#fff" textLength="53.5" lengthAdjust="spacingAndGlyphs">Horizontal</text>
<rect x="12.5" y="58.5" width="39" height="39.5" rx="4" fill="url(#btn)" stroke="url(#bord)"/>
<rect x="12.5" y="123.5" width="39" height="39.5" rx="4" fill="url(#btn)" stroke="url(#bord)"/>
<rect x="12.5" y="188.5" width="39" height="39.5" rx="4" fill="url(#btn)" stroke="url(#bord)"/>
<rect x="12.5" y="253.5" width="39" height="39.5" rx="4" fill="url(#btn)" stroke="url(#bord)"/>
<rect x="12.5" y="318.5" width="39" height="39.5" rx="4" fill="url(#btn)" stroke="url(#bord)"/>
<rect x="12.5" y="383.5" width="39" height="39.5" rx="4" fill="url(#btn)" stroke="url(#bord)"/>
<path d="M19 86.5 H23.5 V65.5 H29.5 V86.5 H36.5 V65.5 H42.5 V86.5 H47" fill="none" stroke="#f0f0f0" stroke-width="1.2"/>
<path d="M21 74.5 H26 M34 74.5 H39" stroke="#1e8cff" stroke-width="1.4"/>
<path d="M23 89.5 H37.5 M23 89.5 l3 -3 M23 89.5 l3 3 M37.5 89.5 l-3 -3 M37.5 89.5 l-3 3" stroke="#1e8cff" stroke-width="1.4" fill="none"/>
<path d="M21 130.5 H26.5 V151.5 H36.5 V130.5 H42.5 V151.5 H48" fill="none" stroke="#f0f0f0" stroke-width="1.2"/>
<path d="M24 140.5 H29 M40 140.5 H45" stroke="#1e8cff" stroke-width="1.4"/>
<path d="M26 154.5 H43.5 M26 154.5 l3 -3 M26 154.5 l3 3 M43.5 154.5 l-3 -3 M43.5 154.5 l-3 3" stroke="#1e8cff" stroke-width="1.4" fill="none"/>
<path d="M19.5 154.5 L24.5 149.5 M19 147 L20.5 146 V150.5 M19 150.5 H22" stroke="#1e8cff" stroke-width="1" fill="none"/>
<path d="M21 219.5 H27.5 L38.5 196.5 H46" fill="none" stroke="#f0f0f0" stroke-width="1.2"/>
<path d="M34 200.5 H41 M26 215.5 H33" stroke="#1e8cff" stroke-width="1.4"/>
<path d="M32 218.5 H41 M32 218.5 l3 -3 M32 218.5 l3 3 M41 218.5 l-3 -3 M41 218.5 l-3 3" stroke="#1e8cff" stroke-width="1.4" fill="none"/>
<path d="M21 261.5 H27.5 L38.5 284.5 H46" fill="none" stroke="#f0f0f0" stroke-width="1.2"/>
<path d="M26 265.5 H33 M34 280.5 H41" stroke="#1e8cff" stroke-width="1.4"/>
<path d="M26 283.5 H35 M26 283.5 l3 -3 M26 283.5 l3 3 M35 283.5 l-3 -3 M35 283.5 l-3 3" stroke="#1e8cff" stroke-width="1.4" fill="none"/>
<path d="M19 342.5 H26.5 V326.5 H39.5 V342.5 H47" fill="none" stroke="#f0f0f0" stroke-width="1.2"/>
<path d="M24 334.5 H29 M37 334.5 H42" stroke="#1e8cff" stroke-width="1.4"/>
<path d="M26 346.5 H40 M26 346.5 l3 -3 M26 346.5 l3 3 M40 346.5 l-3 -3 M40 346.5 l-3 3" stroke="#1e8cff" stroke-width="1.4" fill="none"/>
<path d="M19 391.5 H26.5 V407.5 H39.5 V391.5 H47" fill="none" stroke="#f0f0f0" stroke-width="1.2"/>
<path d="M24 399.5 H29 M37 399.5 H42" stroke="#1e8cff" stroke-width="1.4"/>
<path d="M26 411.5 H40 M26 411.5 l3 -3 M26 411.5 l3 3 M40 411.5 l-3 -3 M40 411.5 l-3 3" stroke="#1e8cff" stroke-width="1.4" fill="none"/>
<circle cx="4" cy="201" r="3" fill="#d8d8d8"/><circle cx="4" cy="211" r="1.8" fill="#666"/><circle cx="4" cy="221" r="1.8" fill="#666"/><circle cx="4" cy="231" r="1.8" fill="#666"/>
<text x="13.7" y="109.5" font-family="Liberation Sans" font-size="12.5" fill="#1e8cff" textLength="34.6" lengthAdjust="spacingAndGlyphs">Period</text>
<text x="19.7" y="174.7" font-family="Liberation Sans" font-size="12.5" fill="#1e8cff" textLength="23.6" lengthAdjust="spacingAndGlyphs">Freq</text>
<text x="3.7" y="240.3" font-family="Liberation Sans" font-size="12.5" fill="#1e8cff" textLength="55.5" lengthAdjust="spacingAndGlyphs">Rise Time</text>
<text x="3.7" y="305.3" font-family="Liberation Sans" font-size="12.5" fill="#1e8cff" textLength="49.6" lengthAdjust="spacingAndGlyphs">Fall Time</text>
<text x="13" y="369.7" font-family="Liberation Sans" font-size="12.5" fill="#1e8cff" textLength="36.7" lengthAdjust="spacingAndGlyphs">+Width</text>
<text x="14.2" y="434.7" font-family="Liberation Sans" font-size="12.5" fill="#1e8cff" textLength="34.1" lengthAdjust="spacingAndGlyphs">-Width</text>
<path d="M800 37.5 H687.5 V116 L701.5 130 V437.5 H800" fill="none" stroke="#5a5a5a"/>
<text transform="translate(699.8,95.5) rotate(-90)" font-family="Liberation Sans" font-size="13" fill="#fff" textLength="31.5" lengthAdjust="spacingAndGlyphs">Utility</text>
<rect x="704.5" y="41.5" width="87" height="61.5" rx="4" fill="url(#btn)" stroke="url(#bord)"/>
<text x="715.3" y="77.5" font-family="Liberation Sans" font-size="16" fill="#f0f0f0" textLength="67.2" lengthAdjust="spacingAndGlyphs">IO Setting</text>
<path d="M741.5 87.8 H753.5 L747.5 94.3 Z" fill="#10c0f0"/>
<rect x="704.5" y="107.5" width="87" height="61.5" rx="4" fill="url(#btn)" stroke="url(#bord)"/>
<text x="727.5" y="121.7" font-family="Liberation Sans" font-size="15" fill="#f0f0f0" textLength="44.2" lengthAdjust="spacingAndGlyphs">Sound</text>
<rect x="707.5" y="127.5" width="81" height="37" rx="3" fill="#000" stroke="#8a8a8a"/>
<path d="M742.5 146.8 V150.8 L749.8 156.4 L752.6 154.6 V143.2 L749.8 141.4 Z" fill="none" stroke="#fff" stroke-width="1.3" stroke-linejoin="round"/>
<path d="M749.6 142 V156" stroke="#fff" stroke-width="1.1"/><circle cx="749.8" cy="149" r="1.3" fill="none" stroke="#fff" stroke-width="0.9"/>
<path d="M754 149.3 H759 M754.5 146.5 L757.8 143.2 M754.5 152.2 L757.8 155.5" stroke="#fff" stroke-width="1"/>
<rect x="704.5" y="173.5" width="87" height="61.5" rx="4" fill="url(#btn)" stroke="url(#bord)"/>
<text x="715.3" y="187.8" font-family="Liberation Sans" font-size="15.5" fill="#f0f0f0" textLength="69" lengthAdjust="spacingAndGlyphs">Language</text>
<rect x="707.5" y="193.5" width="81" height="37" rx="3" fill="#000" stroke="#8a8a8a"/>
<text x="727.5" y="219.2" font-family="Liberation Sans" font-size="14" fill="#f0f0f0" textLength="45" lengthAdjust="spacingAndGlyphs">English</text>
<path d="M715 210.8 V221.7 L709.2 216.25 Z" fill="#10c0f0"/>
<circle cx="796" cy="206" r="3" fill="#d8d8d8"/><circle cx="796" cy="216" r="1.8" fill="#666"/><circle cx="796" cy="226" r="1.8" fill="#666"/>
<rect x="704.5" y="239.5" width="87" height="61.5" rx="4" fill="url(#btn)" stroke="url(#bord)"/>
<text x="716.3" y="271.6" font-family="Liberation Sans" font-size="16" fill="#f0f0f0" textLength="65.4" lengthAdjust="spacingAndGlyphs">Pass/Fail</text>
<path d="M741.5 285.8 H753.5 L747.5 292.3 Z" fill="#10c0f0"/>
<rect x="704.5" y="305.5" width="87" height="61.5" rx="4" fill="url(#btn)" stroke="url(#bord)"/>
<text x="723.9" y="337.9" font-family="Liberation Sans" font-size="16" fill="#f0f0f0" textLength="51.3" lengthAdjust="spacingAndGlyphs">Record</text>
<path d="M741.5 351.9 H753.5 L747.5 358.4 Z" fill="#10c0f0"/>
<rect x="704.5" y="371.5" width="87" height="61.5" rx="4" fill="url(#btn)" stroke="url(#bord)"/>
<text x="723.3" y="404.4" font-family="Liberation Sans" font-size="16" fill="#f0f0f0" textLength="51.9" lengthAdjust="spacingAndGlyphs">System</text>
<path d="M741.5 418 H753.5 L747.5 424.5 Z" fill="#10c0f0"/>
<path d="M0 454 H113 L100 480 H-13 Z" fill="url(#hatY)"/>
<path d="M30 456 H110 L99 478 H19 Z" fill="#000"/>
<path d="M-20 454 H113" stroke="none"/>
<path d="M117 454 H230 L217 480 H104 Z" fill="url(#hatC)"/>
<path d="M146.5 456 H227 L216 478 H135.5 Z" fill="#000"/>
<path d="M232 454 H347 L334 480 H219 Z" fill="url(#hatM)"/>
<path d="M263.5 456 H344 L333 478 H252.5 Z" fill="#000"/>
<path d="M350.5 454 H464 L451 480 H337.5 Z" fill="#0c8aff"/>
<path d="M381 456 H461 L450 478 H370 Z" fill="#000"/>
<text x="5" y="475" font-family="Liberation Sans" font-size="21" fill="#f0f000">1</text>
<path d="M32 462.5 H39" stroke="#f0f000" stroke-width="1.2"/>
<path d="M32 466.5 H39.5" stroke="#f0f000" stroke-width="1.2" stroke-dasharray="1 1"/>
<text x="52.8" y="472" font-family="Liberation Sans" font-size="12.5" fill="#f0f000" textLength="34.4" lengthAdjust="spacingAndGlyphs">2.00 V</text>
<text x="120" y="475" font-family="Liberation Sans" font-size="21" fill="#00ffff">2</text>
<path d="M148 462.5 H155" stroke="#00e6e6" stroke-width="1.2"/>
<path d="M148 466.5 H155.5" stroke="#00e6e6" stroke-width="1.2" stroke-dasharray="1 1"/>
<text x="168.7" y="472" font-family="Liberation Sans" font-size="12.5" fill="#00e6e6" textLength="42.5" lengthAdjust="spacingAndGlyphs">50.0mV</text>
<text x="238" y="475" font-family="Liberation Sans" font-size="21" fill="#ff10ff">3</text>
<path d="M265 462.5 H272" stroke="#ff10ff" stroke-width="1.2"/>
<path d="M265 466.5 H272.5" stroke="#ff10ff" stroke-width="1.2" stroke-dasharray="1 1"/>
<text x="285.7" y="472" font-family="Liberation Sans" font-size="12.5" fill="#ff10ff" textLength="42.5" lengthAdjust="spacingAndGlyphs">50.0mV</text>
<text x="354" y="475" font-family="Liberation Sans" font-size="21" fill="#000">4</text>
<path d="M382 462.5 H389" stroke="#1a90ff" stroke-width="1.2"/>
<path d="M382 466.5 H389.5" stroke="#1a90ff" stroke-width="1.2" stroke-dasharray="1 1"/>
<text x="402.7" y="472" font-family="Liberation Sans" font-size="12.5" fill="#1a90ff" textLength="42.5" lengthAdjust="spacingAndGlyphs">50.0mV</text>
<path d="M800 454.5 H712.5 L700 480" fill="none" stroke="#555"/>
<path d="M742 466.5 H759 M745 466.5 C748 466.5 749 462 753 462 H755 M748 466.5 C751 466.5 752 470 755 470 H756" fill="none" stroke="#fff" stroke-width="1.2"/>
<circle cx="741.5" cy="466.5" r="1.8" fill="#fff"/><circle cx="755.5" cy="462" r="1.5" fill="#fff"/><rect x="754.5" y="468.5" width="3" height="3" fill="#fff"/><path d="M758 464.5 L761 466.5 L758 468.5 Z" fill="#fff"/>
<path d="M765.8 463.2 V467.2 L773 472.6 L775.2 471 V459.2 L773 457.6 Z" fill="none" stroke="#fff" stroke-width="1.4" stroke-linejoin="round"/>
<path d="M773 458 V472" stroke="#fff" stroke-width="1.2"/><circle cx="773" cy="465.2" r="1.4" fill="none" stroke="#fff" stroke-width="0.9"/>
<path d="M777 465.3 H782 M777 462 L781 458.5 M777 468.5 L781 472" stroke="#fff" stroke-width="1"/>
</svg>
</body></html>
